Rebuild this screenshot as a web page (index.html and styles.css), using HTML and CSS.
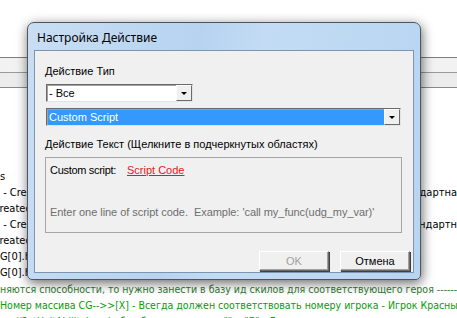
FILE: index.html
```html
<!DOCTYPE html>
<html lang="ru">
<head>
  <meta charset="UTF-8" />
  <title>Настройка Действие</title>
  <link rel="stylesheet" href="styles.css">
</head>
<body>
  <div class="editor">
    <div class="toolbar">
      <div class="toolbar-row"></div>
      <div class="toolbar-row"></div>
    </div>
    <div class="code">
      <div class="line">s</div>
      <div class="line"><span>&nbsp;- Created unit</span><span>Стандартна</span></div>
      <div class="line shift"><span>created unit</span></div>
      <div class="line"><span>&nbsp;- Created unit</span><span>стандартн</span></div>
      <div class="line shift"><span>created unit</span></div>
      <div class="line shift-more"><span>CG[0].hero</span></div>
      <div class="line shift-more"><span>CG[0].hero</span></div>
      <div class="line comment dark">няются способности, то нужно занести в базу ид скилов для соответствующего героя ------</div>
      <div class="line comment">Номер массива CG-->>[X] - Всегда должен соответствовать номеру игрока - Игрок Красный</div>
      <div class="line comment">&nbsp;&nbsp;&nbsp;&nbsp;&nbsp;//SetUnitAbilityLevel - бла бла и так далее "" и "Б" - Для</div>
    </div>
  </div>

  <div class="dialog">
    <div class="title">Настройка Действие</div>
    <div class="client">
      <div class="label">Действие Тип</div>
      <div class="select short">
        <span class="select-text">- Все</span>
        <span class="drop"></span>
      </div>
      <div class="select long selected">
        <span class="select-text">Custom Script</span>
        <span class="drop"></span>
      </div>
      <div class="label second">Действие Текст (Щелкните в подчеркнутых областях)</div>
      <div class="group">
        <div class="script-row">
          <span class="script-name">Custom script:</span>
          <span class="link">Script Code</span>
        </div>
        <div class="hint">Enter one line of script code.&nbsp; Example: 'call my_func(udg_my_var)'</div>
      </div>
      <div class="buttons">
        <button class="btn" disabled>OK</button>
        <button class="btn">Отмена</button>
      </div>
    </div>
  </div>
</body>
</html>
```

FILE: styles.css
```css
body {
  margin: 0;
  width: 457px;
  height: 318px;
  overflow: hidden;
  position: relative;
  background: #fff;
  font-family: 'Liberation Sans', Arial, sans-serif;
  font-size: 12px;
  color: #000;
}

.editor {
  padding-top: 57px;
}

.toolbar {
  height: 29px;
  border-top: 1px solid #7d7d7d;
  border-bottom: 1px solid #8a8a8a;
  display: flex;
  flex-direction: column;
}

.toolbar-row {
  flex: 1;
  background: #f2f2f2;
}

.toolbar-row + .toolbar-row {
  border-top: 1px solid #9a9a9a;
  background: #ececec;
}

.code {
  padding-top: 81px;
  font-family: 'DejaVu Sans', sans-serif;
  font-stretch: condensed;
  font-size: 11px;
}

.line {
  height: 16px;
  line-height: 16px;
  white-space: nowrap;
  display: flex;
  justify-content: space-between;
  overflow: hidden;
}

.line.shift span {
  margin-left: -6px;
}

.line.shift-more span {
  margin-left: -7px;
}

.comment {
  color: #0c9a0c;
  font-size: 10.5px;
}

.comment.dark {
  color: #2f7a2f;
}

.dialog {
  position: absolute;
  left: 27px;
  top: 22px;
  width: 394px;
  height: 258px;
  box-sizing: border-box;
  border: 1px solid #4c5560;
  border-radius: 7px 7px 5px 5px;
  background: linear-gradient(100deg, #c9def3 0%, #b6d3f0 40%, #c3dcf4 55%, #b7d4f1 100%);
  box-shadow: 1px 3px 12px rgba(0, 0, 0, 0.6);
  padding: 0 6px 6px 6px;
  display: flex;
  flex-direction: column;
}

.title {
  height: 27px;
  line-height: 29px;
  padding-left: 3px;
  font-family: 'Noto Sans', sans-serif;
  font-size: 12px;
  color: #000;
}

.client {
  flex: 1;
  background: #f0f0f0;
  border: 1px solid #7e95ad;
  padding: 13px 0 0 10px;
  display: flex;
  flex-direction: column;
  align-items: flex-start;
  font-size: 11px;
}

.label {
  height: 14px;
  line-height: 14px;
}

.label.second {
  margin-top: 11px;
}

.select {
  box-sizing: border-box;
  height: 18px;
  margin-left: 1px;
  background: #fff;
  border-top: 1px solid #696969;
  border-left: 1px solid #696969;
  border-right: 1px solid #e3e3e3;
  border-bottom: 1px solid #e3e3e3;
  box-shadow: inset 1px 1px 0 #a0a0a0;
  display: flex;
  align-items: center;
  justify-content: space-between;
}

.short {
  width: 147px;
  margin-top: 6px;
}

.long {
  width: 355px;
  margin-top: 6px;
}

.select-text {
  padding-left: 2px;
  font-size: 11px;
}

.selected {
  background: #3399ff;
  color: #fff;
}

.selected .select-text {
  margin-left: 1px;
  padding-left: 1px;
  height: 14px;
  line-height: 14px;
}

.drop {
  width: 16px;
  height: 16px;
  box-sizing: border-box;
  background: #f0f0f0;
  border-top: 1px solid #fff;
  border-left: 1px solid #fff;
  border-right: 1px solid #6a6a6a;
  border-bottom: 1px solid #6a6a6a;
  position: relative;
}

.drop::after {
  content: '';
  position: absolute;
  left: 4px;
  top: 6px;
  border-left: 3px solid transparent;
  border-right: 3px solid transparent;
  border-top: 3px solid #000;
}

.group {
  box-sizing: border-box;
  width: 357px;
  height: 76px;
  margin-top: 6px;
  border: 1px solid #a6a6a6;
  padding: 5px 0 0 4px;
  display: flex;
  flex-direction: column;
}

.script-row {
  display: flex;
  height: 14px;
  line-height: 14px;
}

.script-name {
  width: 77px;
  letter-spacing: -0.3px;
}

.link {
  color: #e21a1a;
  text-decoration: underline;
}

.hint {
  margin-top: 29px;
  color: #6e6e6e;
  letter-spacing: -0.05px;
}

.buttons {
  align-self: stretch;
  display: flex;
  justify-content: flex-end;
  gap: 11px;
  margin-top: 18px;
  padding-right: 3px;
}

.btn {
  width: 70px;
  height: 20px;
  box-sizing: border-box;
  font-family: 'Liberation Sans', Arial, sans-serif;
  font-size: 11px;
  background: #f0f0f0;
  color: #000;
  border-top: 1px solid #fff;
  border-left: 1px solid #fff;
  border-right: 1px solid #6a6a6a;
  border-bottom: 1px solid #6a6a6a;
  box-shadow: 1px 1px 0 #404040, inset -1px -1px 0 #a0a0a0;
  padding: 0;
}

.btn:disabled {
  color: #a0a0a0;
}
```
